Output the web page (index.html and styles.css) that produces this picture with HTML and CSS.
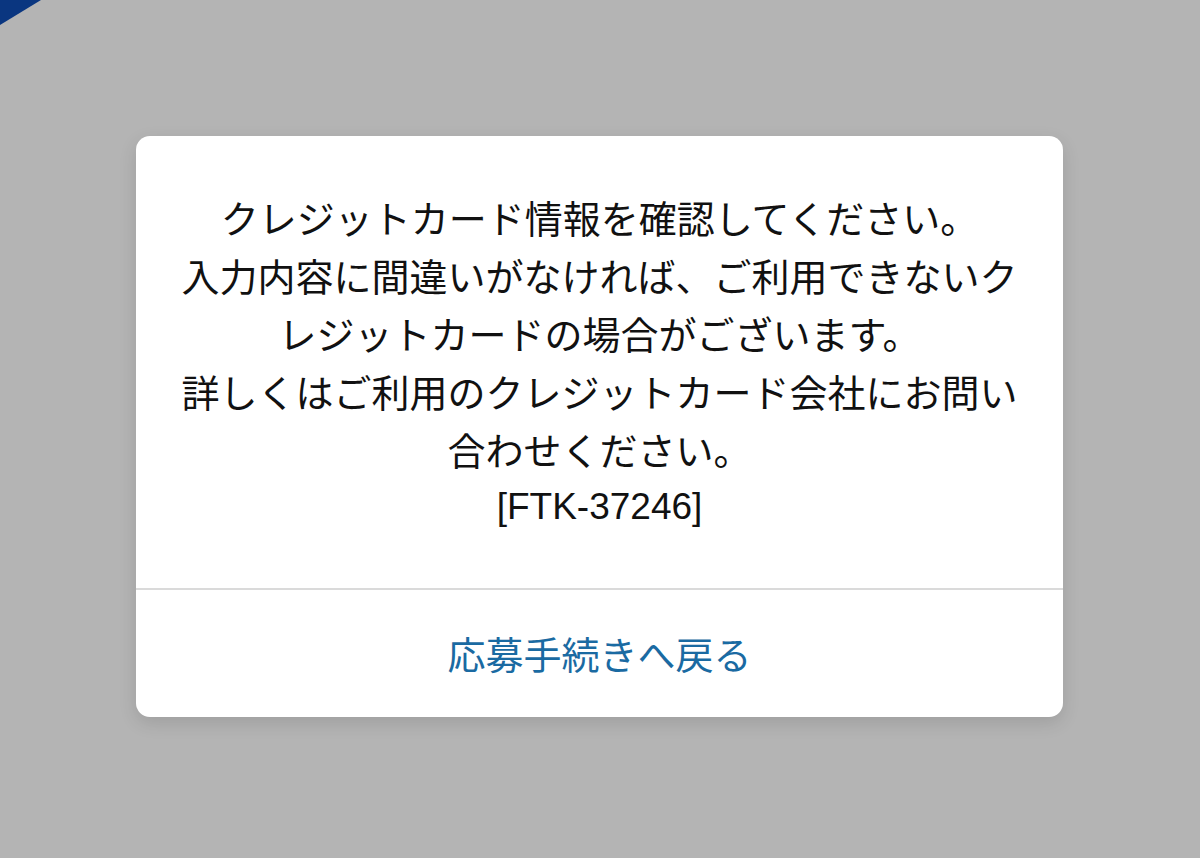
FILE: index.html
```html
<!DOCTYPE html>
<html lang="ja">
<head>
<meta charset="utf-8">
<title>エラー</title>
<link rel="stylesheet" href="styles.css">
</head>
<body>
<svg class="corner" width="60" height="40" viewBox="0 0 60 40" aria-hidden="true"><polygon points="0,0 41,0 0,25" fill="#0a3680"/></svg>
<div class="overlay">
  <div class="dialog">
    <div class="message">
      <p class="line">クレジットカード情報を確認してください。</p>
      <p class="line">入力内容に間違いがなければ、ご利用できないク</p>
      <p class="line">レジットカードの場合がございます。</p>
      <p class="line">詳しくはご利用のクレジットカード会社にお問い</p>
      <p class="line">合わせください。</p>
      <p class="line code">[FTK-37246]</p>
    </div>
    <div class="actions">
      <button class="action" type="button">応募手続きへ戻る</button>
    </div>
  </div>
</div>
</body>
</html>
```
FILE: styles.css
```css
html, body {
  margin: 0;
  padding: 0;
  background: #b4b4b4;
  width: 1200px;
  height: 858px;
  overflow: hidden;
}
body {
  font-family: "Noto Sans CJK JP", "Noto Sans", sans-serif;
  color: #111;
}
.corner {
  position: absolute;
  left: 0;
  top: 0;
}
.overlay {
  display: flex;
  justify-content: center;
  padding-top: 136px;
  padding-right: 1px;
}
.dialog {
  width: 927px;
  background: #fff;
  border-radius: 14px;
  box-shadow: 0 6px 18px rgba(0, 0, 0, 0.12);
  display: flex;
  flex-direction: column;
}
.message {
  padding: 52px 20px 52px;
  border-bottom: 2px solid #dadada;
  text-align: center;
}
.line {
  margin: 0;
  font-size: 38px;
  line-height: 58px;
  white-space: nowrap;
}
.code {
  font-family: "Liberation Sans", Arial, sans-serif;
  font-size: 37px;
}
.actions {
  height: 127px;
  display: flex;
  align-items: center;
  justify-content: center;
}
.action {
  border: 0;
  background: none;
  padding: 0;
  font-family: "Noto Sans CJK JP", "Noto Sans", sans-serif;
  font-size: 38px;
  color: #1a6aa2;
  line-height: 58px;
  margin-top: -2px;
}
```
